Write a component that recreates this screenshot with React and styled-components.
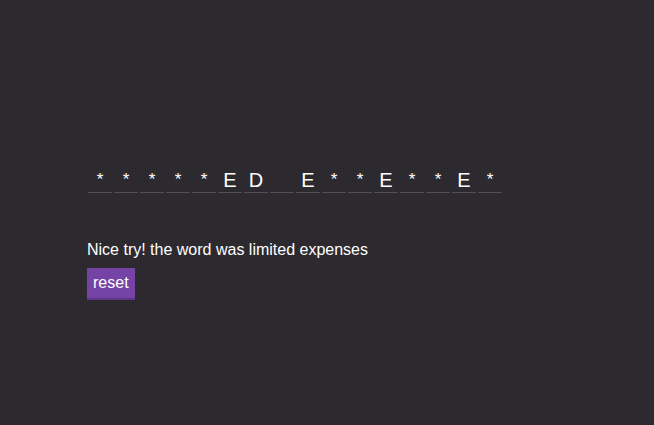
import React from 'react'
import styled, { createGlobalStyle } from 'styled-components'

const GlobalStyle = createGlobalStyle`
    html, body {
        margin:0;
        padding:0;
        background-color:#2c2a2f;
    }
    body {
        font-family:"Liberation Sans", Arial, sans-serif;
        color:#fff;
    }
`

const Page = styled.div`
    width:654px;
    height:425px;
    box-sizing:border-box;
    padding:168px 0 0 87px;
    display:flex;
    flex-direction:column;
    align-items:flex-start;
`

const Word = styled.div`
    display:flex;
    gap:2px;
    margin-left:1px;
`

const Slot = styled.span`
    width:24px;
    height:24px;
    line-height:24px;
    font-size:${props => (props.$masked ? '17px' : '20px')};
    text-align:center;
    color:#fff;
    border-bottom:1px solid #515056;
`

const Message = styled.p`
    margin:48px 0 9px 0;
    font-size:16px;
    line-height:18px;
`

const ResetButton = styled.button`
    font-family:"Liberation Sans", Arial, sans-serif;
    font-size:16px;
    line-height:18px;
    color:#fff;
    background-color:#7443a5;
    border:none;
    border-bottom:2px solid #5f368c;
    padding:6px 6px;
    margin:0;
    cursor:pointer;
`

const word = 'limited expenses'
const guessed = ['e', 'd']

const App = () => {
    return (
        <>
            <GlobalStyle />
            <Page>
                <Word>
                    {word.split('').map((ch, i) => {
                        if (ch === ' ') return <Slot key={i}>{'\u00a0'}</Slot>
                        const shown = guessed.includes(ch)
                        return (
                            <Slot key={i} $masked={!shown}>
                                {shown ? ch.toUpperCase() : '*'}
                            </Slot>
                        )
                    })}
                </Word>
                <Message>Nice try! the word was {word}</Message>
                <ResetButton>reset</ResetButton>
            </Page>
        </>
    )
}

export default App
